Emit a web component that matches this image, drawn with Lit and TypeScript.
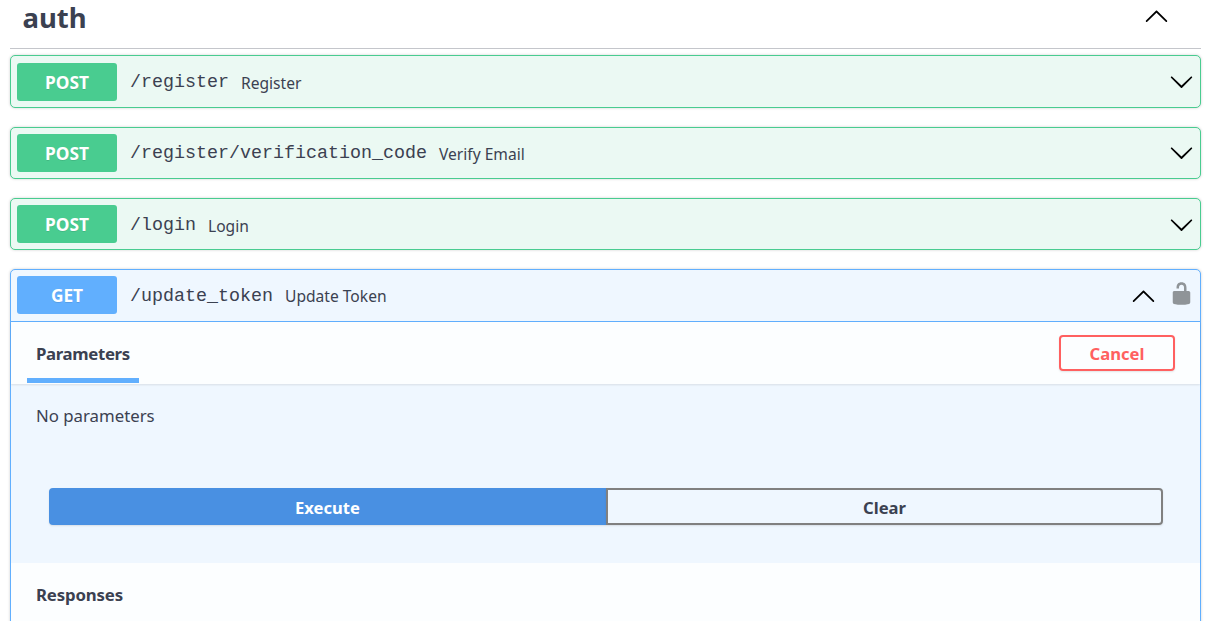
import { LitElement, html, css, svg } from "lit";
import { customElement, property } from "lit/decorators.js";

const ARROW_UP =
  "M17.418 14.908C17.69 15.176 18.127 15.176 18.397 14.908C18.667 14.64 18.668 14.207 18.397 13.939L10.489 6.109C10.219 5.841 9.782 5.841 9.51 6.109L1.602 13.939C1.332 14.207 1.332 14.64 1.602 14.908C1.873 15.176 2.311 15.176 2.581 14.908L10 7.767L17.418 14.908Z";
const ARROW_DOWN =
  "M17.418 6.109C17.69 5.841 18.127 5.841 18.397 6.109C18.667 6.377 18.668 6.811 18.397 7.078L10.489 14.908C10.219 15.176 9.782 15.176 9.51 14.908L1.602 7.078C1.332 6.811 1.332 6.377 1.602 6.109C1.873 5.841 2.311 5.841 2.581 6.109L10 13.25L17.418 6.109Z";
const UNLOCKED =
  "M15.8 8H14V5.6C14 2.703 12.665 1 10 1 7.334 1 6 2.703 6 5.6V6h2v-.801C8 3.754 8.797 3 10 3c1.203 0 2 .754 2 2.199V8H4c-.553 0-1 .646-1 1.199V17c0 .549.428 1.139.951 1.307l1.197.387C5.672 18.861 6.55 19 7.1 19h5.8c.549 0 1.428-.139 1.951-.307l1.196-.387c.524-.167.953-.757.953-1.306V9.199C17 8.646 16.352 8 15.8 8z";

const icon = (d: string, cls = "") => html`<svg class="icon ${cls}" viewBox="0 0 20 20">${svg`<path d=${d}></path>`}</svg>`;

const shared = css`
  * {
    box-sizing: border-box;
  }
  .icon {
    display: block;
    flex: none;
    width: 25px;
    height: 25px;
  }
`;

@customElement("api-operation")
class ApiOperation extends LitElement {
  @property() method = "post";
  @property() path = "";
  @property() summary = "";
  @property({ type: Boolean }) open = false;

  static styles = [
    shared,
    css`
      :host {
        display: block;
        margin-bottom: 19px;
      }
      .block {
        border: 1px solid var(--tone);
        border-radius: 5px;
        background: var(--tint);
        box-shadow: 0 0 3px rgba(0, 0, 0, 0.19);
      }
      .post {
        --tone: #49cc90;
        --tint: #ebf9f3;
      }
      .get {
        --tone: #61affe;
        --tint: #eff7ff;
      }
      .head {
        display: flex;
        align-items: center;
        height: 50.33px;
        padding: 0 6px;
      }
      .expanded .head {
        height: 52px;
        padding-bottom: 1px;
        border-bottom: 1px solid var(--tone);
      }
      .method {
        width: 100px;
        height: 38px;
        margin-top: 0.35px;
        line-height: 39.6px;
        border-radius: 3px;
        background: var(--tone);
        color: #fff;
        font-size: 17.3px;
        font-weight: 700;
        text-align: center;
        text-shadow: 0 1px 0 rgba(0, 0, 0, 0.1);
      }
      .path {
        margin: 3px 0 0 13px;
        font: 18.33px/24px "Liberation Mono", monospace;
        white-space: nowrap;
      }
      .summary {
        margin: 3px 0 0 12px;
        flex: 1;
        font-size: 15.6px;
        line-height: 22px;
      }
      .expanded .summary {
        margin-top: 1px;
      }
      .arrow {
        fill: #000;
      }
      .lock {
        margin: -3px 0 0 13px;
        fill: #8f9498;
      }
    `,
  ];

  render() {
    return html`
      <div class="block ${this.method} ${this.open ? "expanded" : ""}">
        <div class="head">
          <span class="method">${this.method.toUpperCase()}</span>
          <span class="path">${this.path}</span>
          <span class="summary">${this.summary}</span>
          ${icon(this.open ? ARROW_UP : ARROW_DOWN, "arrow")}
          ${this.open ? icon(UNLOCKED, "lock") : ""}
        </div>
        <slot></slot>
      </div>
    `;
  }
}

@customElement("app-root")
class AppRoot extends LitElement {
  static styles = [
    shared,
    css`
      :host {
        display: block;
        height: 621px;
        overflow: hidden;
        padding: 0 11px 0 10px;
        box-sizing: border-box;
        background: #fff;
        color: #3b4151;
        font-family: "Noto Sans", "Open Sans", sans-serif;
      }
      .tag {
        display: flex;
        align-items: flex-start;
        justify-content: space-between;
        height: 49px;
        padding: 0 32px 0 12.5px;
        margin-bottom: 6.33px;
        border-bottom: 1px solid #c4c6cb;
      }
      .title {
        margin: 0;
        font-size: 27.5px;
        line-height: 36px;
        font-weight: 700;
      }
      .tag .icon {
        margin-top: 3px;
      }
      .section {
        display: flex;
        justify-content: space-between;
        height: 62px;
        padding: 0 25px 0 16px;
        background: rgba(255, 255, 255, 0.8);
        box-shadow: 0 1px 2px rgba(0, 0, 0, 0.1);
      }
      .tab {
        height: 61px;
        padding: 0 9px;
        border-bottom: 5px solid #61affe;
        font-size: 16.8px;
        letter-spacing: -0.35px;
        line-height: 63px;
        font-weight: 700;
      }
      .plain {
        border: 0;
        letter-spacing: -0.15px;
      }
      .btn {
        border: 2px solid gray;
        border-radius: 4px;
        background: transparent;
        box-shadow: 0 1px 2px rgba(0, 0, 0, 0.1);
        color: #3b4151;
        font: 700 16.6px/24px "Noto Sans", sans-serif;
        padding: 2px 0 0;
      }
      .cancel {
        width: 116px;
        height: 36px;
        margin-top: 13px;
        border-color: #ff6060;
        color: #ff6060;
      }
      .empty {
        margin: 0;
        padding: 19.5px 25px 0;
        height: 104px;
        font-size: 16.8px;
        line-height: 24px;
      }
      .actions {
        display: flex;
        height: 75px;
        padding: 0 37px 0 38px;
      }
      .actions .btn {
        flex: 1;
        height: 37px;
      }
      .actions .execute {
        border-color: #4990e2;
        background: #4990e2;
        color: #fff;
        border-radius: 4px 0 0 4px;
      }
      .actions .clear {
        border-radius: 0 4px 4px 0;
      }
      .responses {
        height: 90px;
        box-shadow: none;
      }
    `,
  ];

  render() {
    return html`
      <header class="tag">
        <h3 class="title">auth</h3>
        ${icon(ARROW_UP)}
      </header>
      <api-operation path="/register" summary="Register"></api-operation>
      <api-operation path="/register/verification_code" summary="Verify Email"></api-operation>
      <api-operation path="/login" summary="Login"></api-operation>
      <api-operation method="get" path="/update_token" summary="Update Token" open>
        <div class="section">
          <span class="tab">Parameters</span>
          <button class="btn cancel">Cancel</button>
        </div>
        <p class="empty">No parameters</p>
        <div class="actions">
          <button class="btn execute">Execute</button>
          <button class="btn clear">Clear</button>
        </div>
        <div class="section responses">
          <span class="tab plain">Responses</span>
        </div>
      </api-operation>
    `;
  }
}
